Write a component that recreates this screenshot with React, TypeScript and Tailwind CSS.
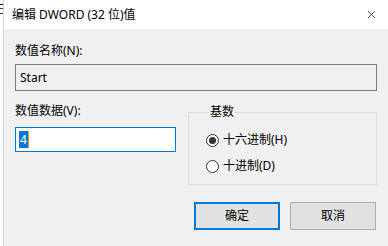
import { X } from "lucide-react"

const stripChars = ["王", "<", "<", "-", "=", "l", "n", "o", "c", "-", "o", "n", "E"]

function Radio({ checked, label }: { checked?: boolean; label: string }) {
  return (
    <div className="flex h-[16px] items-center gap-[4px]">
      <span className="flex h-[13px] w-[13px] items-center justify-center rounded-full border border-[#333333] bg-white">
        {checked && <span className="h-[7px] w-[7px] rounded-full bg-[#333333]" />}
      </span>
      <span className="leading-[16px]">{label}</span>
    </div>
  )
}

export default function App() {
  return (
    <div className="flex h-[246px] w-[388px] overflow-hidden bg-white text-[12px] text-black font-['Noto_Sans','Noto_Sans_CJK_SC',sans-serif]">
      {/* window behind the dialog */}
      <div className="w-[3px] overflow-hidden">
        <div className="-ml-[7px] flex flex-col leading-[20px] text-[12px]">
          {stripChars.map((c, i) => (
            <span key={i}>{c}</span>
          ))}
        </div>
      </div>

      <div className="flex flex-1 flex-col border-l border-[#d6d6d6]">
        {/* title bar */}
        <div className="flex h-[29px] items-center justify-between bg-white pl-[8px] pr-[10px]">
          <span className="leading-[16px]">编辑 DWORD (32 位)值</span>
          <X className="h-[13px] w-[13px] text-black" strokeWidth={1.2} />
        </div>

        {/* body */}
        <div className="flex flex-1 flex-col bg-[#f0f0f0] pl-[11px] pr-[11px] pt-[14px]">
          <div className="leading-[16px]">数值名称(N):</div>
          <div className="mt-[5px] flex h-[27px] items-center border border-[#7a7a7a] bg-[#f0f0f0] pl-[4px]">
            Start
          </div>

          <div className="mt-[12px] flex">
            <div className="flex w-[161px] flex-col">
              <div className="leading-[16px]">数值数据(V):</div>
              <div className="mt-[8px] flex h-[25px] items-center border border-[#0078d7] bg-white pl-[3px]">
                <span className="flex h-[17px] items-center bg-[#0078d7] px-[1px] text-white">4</span>
                <span className="h-[17px] w-[1px] bg-[#f7941d]" />
              </div>
            </div>

            <fieldset className="ml-[12px] mt-[1px] flex-1 border border-[#dcdcdc] pb-[10px] pl-[17px]">
              <legend className="ml-[3px] px-[1px] leading-[16px]">基数</legend>
              <div className="mt-[12px]">
                <Radio checked label="十六进制(H)" />
              </div>
              <div className="mt-[10px]">
                <Radio label="十进制(D)" />
              </div>
            </fieldset>
          </div>

          <div className="mt-[17px] flex justify-end gap-[10px] pr-[1px]">
            <button className="flex h-[28px] w-[86px] items-center justify-center border-2 border-[#0078d7] bg-[#e1e1e1]">
              确定
            </button>
            <button className="flex h-[28px] w-[86px] items-center justify-center border border-[#adadad] bg-[#e1e1e1]">
              取消
            </button>
          </div>
        </div>
      </div>
    </div>
  )
}
